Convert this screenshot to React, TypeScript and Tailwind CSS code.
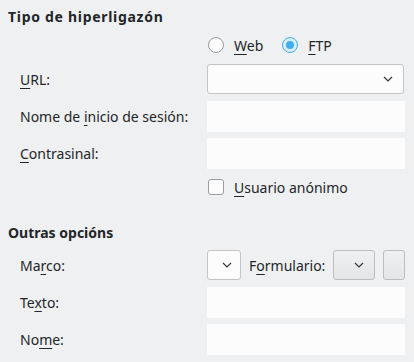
import React from "react";

const font = { fontFamily: '"Noto Sans", "Open Sans", sans-serif' };

function Chevron() {
  return (
    <svg width="10" height="6" viewBox="0 0 10 6" fill="none">
      <path d="M1 1L5 5L9 1" stroke="#31363b" strokeWidth="1.2" />
    </svg>
  );
}

function Mn({ children }: { children: React.ReactNode }) {
  return <span className="underline decoration-1 underline-offset-[3px]">{children}</span>;
}

function Label({ children }: { children: React.ReactNode }) {
  return <div className="w-[199px] shrink-0 pl-3 text-[14px] leading-[19px]">{children}</div>;
}

function TextBox() {
  return <div className="h-[31px] w-[199px] bg-[#fcfcfc]" />;
}

function Row({ className, children }: { className: string; children: React.ReactNode }) {
  return <div className={`flex items-center ${className}`}>{children}</div>;
}

export default function App() {
  return (
    <div
      className="h-[362px] w-[414px] bg-[#eff0f1] pl-2 pr-[9px] text-[#232629]"
      style={font}
    >
      <div className="pt-[7px] text-[14px] font-bold leading-[19px] tracking-[0.7px]">
        Tipo de hiperligazón
      </div>

      {/* link type */}
      <Row className="mt-[11px] h-4">
        <div className="w-[199px] shrink-0" />
        <div className="ml-px flex items-center text-[14px] leading-[19px]">
          <span className="h-4 w-4 rounded-full border border-[#9b9c9d] bg-[#fcfcfc]" />
          <span className="ml-[10px]">
            <Mn>W</Mn>eb
          </span>
          <span className="ml-[19px] flex h-4 w-4 items-center justify-center rounded-full border border-[#3daee9] bg-[#d9eefa]">
            <span className="h-2 w-2 rounded-full bg-[#3daee9]" />
          </span>
          <span className="ml-[10px]">
            <Mn>F</Mn>TP
          </span>
        </div>
      </Row>

      <Row className="mt-[11px] h-[30px]">
        <Label>
          <Mn>U</Mn>RL:
        </Label>
        <div className="flex h-[30px] w-[197px] items-center justify-end rounded-[3px] border border-[#c3c4c5] bg-[#fcfcfc] pr-[10px]">
          <Chevron />
        </div>
      </Row>

      <Row className="mt-[7px] h-[31px]">
        <Label>
          Nome de <Mn>i</Mn>nicio de sesión:
        </Label>
        <TextBox />
      </Row>

      <Row className="mt-[6px] h-[31px]">
        <Label>
          <Mn>C</Mn>ontrasinal:
        </Label>
        <TextBox />
      </Row>

      <Row className="mt-[10px] h-4">
        <div className="w-[199px] shrink-0" />
        <div className="ml-px flex items-center text-[14px] leading-[19px]">
          <span className="h-4 w-4 rounded-[3px] border border-[#9b9c9d] bg-[#fcfcfc]" />
          <span className="ml-[10px]">
            <Mn>U</Mn>suario anónimo
          </span>
        </div>
      </Row>

      <div className="mt-[28px] text-[14px] font-bold leading-[19px]">Outras opcións</div>

      <Row className="mt-[8px] h-[30px]">
        <Label>
          Ma<Mn>r</Mn>co:
        </Label>
        <div className="flex flex-1 items-center">
          <div className="flex h-[30px] w-[34px] items-center justify-end rounded-[3px] border border-[#c3c4c5] bg-[#fcfcfc] pr-[8px]">
            <Chevron />
          </div>
          <span className="ml-2 text-[14px] leading-[19px]">
            F<Mn>o</Mn>rmulario:
          </span>
          <div className="ml-auto flex gap-2">
            <div className="flex h-[30px] w-[42px] items-center justify-end rounded-[3px] border border-[#bcbdbe] bg-gradient-to-b from-[#eff0f1] to-[#e3e5e7] pr-[10px]">
              <Chevron />
            </div>
            <div className="h-[30px] w-[22px] rounded-[3px] border border-[#bcbdbe] bg-gradient-to-b from-[#eff0f1] to-[#e3e5e7]" />
          </div>
        </div>
      </Row>

      <Row className="mt-[7px] h-[31px]">
        <Label>
          Te<Mn>x</Mn>to:
        </Label>
        <TextBox />
      </Row>

      <Row className="mt-[6px] h-[31px]">
        <Label>
          No<Mn>m</Mn>e:
        </Label>
        <TextBox />
      </Row>
    </div>
  );
}
